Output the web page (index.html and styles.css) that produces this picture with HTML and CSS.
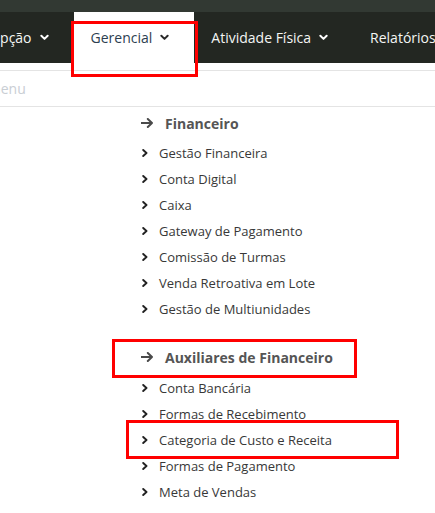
FILE: index.html
```html
<!DOCTYPE html>
<html lang="pt-BR">
<head>
<meta charset="utf-8">
<title>Menu Gerencial</title>
<link rel="stylesheet" href="styles.css">
</head>
<body>
<div class="topstrip"></div>
<nav class="nav">
  <ul class="nav-list">
    <li class="nav-item"><span>Recepção</span><svg class="caret" viewBox="0 0 10 7" width="9" height="7"><path d="M1.5 1.5 L5 5 L8.5 1.5" /></svg></li>
    <li class="nav-item active"><span>Gerencial</span><svg class="caret" viewBox="0 0 10 7" width="9" height="7"><path d="M1.5 1.5 L5 5 L8.5 1.5" /></svg></li>
    <li class="nav-item"><span>Atividade Física</span><svg class="caret" viewBox="0 0 10 7" width="9" height="7"><path d="M1.5 1.5 L5 5 L8.5 1.5" /></svg></li>
    <li class="nav-item"><span>Relatórios</span><svg class="caret" viewBox="0 0 10 7" width="9" height="7"><path d="M1.5 1.5 L5 5 L8.5 1.5" /></svg></li>
  </ul>
</nav>
<div class="gap"></div>
<div class="search"><span class="placeholder">Buscar no menu</span></div>
<div class="menu">
  <div class="group">
    <div class="group-title"><svg class="arrow" viewBox="0 0 12 10" width="12" height="10"><path d="M0.5 5 H11 M6.8 1 L11 5 L6.8 9" /></svg><span>Financeiro</span></div>
    <ul class="items">
      <li><svg class="chev" viewBox="0 0 6 8" width="6" height="8"><path d="M1.2 1 L4.5 4 L1.2 7" /></svg>Gestão Financeira</li>
      <li><svg class="chev" viewBox="0 0 6 8" width="6" height="8"><path d="M1.2 1 L4.5 4 L1.2 7" /></svg>Conta Digital</li>
      <li><svg class="chev" viewBox="0 0 6 8" width="6" height="8"><path d="M1.2 1 L4.5 4 L1.2 7" /></svg>Caixa</li>
      <li><svg class="chev" viewBox="0 0 6 8" width="6" height="8"><path d="M1.2 1 L4.5 4 L1.2 7" /></svg>Gateway de Pagamento</li>
      <li><svg class="chev" viewBox="0 0 6 8" width="6" height="8"><path d="M1.2 1 L4.5 4 L1.2 7" /></svg>Comissão de Turmas</li>
      <li><svg class="chev" viewBox="0 0 6 8" width="6" height="8"><path d="M1.2 1 L4.5 4 L1.2 7" /></svg>Venda Retroativa em Lote</li>
      <li><svg class="chev" viewBox="0 0 6 8" width="6" height="8"><path d="M1.2 1 L4.5 4 L1.2 7" /></svg>Gestão de Multiunidades</li>
    </ul>
  </div>
  <div class="group second">
    <div class="group-title"><svg class="arrow" viewBox="0 0 12 10" width="12" height="10"><path d="M0.5 5 H11 M6.8 1 L11 5 L6.8 9" /></svg><span>Auxiliares de Financeiro</span></div>
    <ul class="items">
      <li><svg class="chev" viewBox="0 0 6 8" width="6" height="8"><path d="M1.2 1 L4.5 4 L1.2 7" /></svg>Conta Bancária</li>
      <li><svg class="chev" viewBox="0 0 6 8" width="6" height="8"><path d="M1.2 1 L4.5 4 L1.2 7" /></svg>Formas de Recebimento</li>
      <li><svg class="chev" viewBox="0 0 6 8" width="6" height="8"><path d="M1.2 1 L4.5 4 L1.2 7" /></svg>Categoria de Custo e Receita</li>
      <li><svg class="chev" viewBox="0 0 6 8" width="6" height="8"><path d="M1.2 1 L4.5 4 L1.2 7" /></svg>Formas de Pagamento</li>
      <li><svg class="chev" viewBox="0 0 6 8" width="6" height="8"><path d="M1.2 1 L4.5 4 L1.2 7" /></svg>Meta de Vendas</li>
    </ul>
  </div>
</div>
<div class="mark mark-tab"></div>
<div class="mark mark-group"></div>
<div class="mark mark-item"></div>
</body>
</html>
```
FILE: styles.css
```css
html, body {
  margin: 0;
  padding: 0;
  background: #ffffff;
  overflow: hidden;
}
body {
  font-family: "Open Sans", "Noto Sans", sans-serif;
  width: 435px;
  height: 513px;
  position: relative;
}
.topstrip {
  height: 12px;
  background: #323933;
}
.nav {
  height: 51px;
  background: #232722;
  overflow: hidden;
}
.nav-list {
  list-style: none;
  margin: 0 0 0 -48px;
  padding: 0;
  display: flex;
  height: 100%;
  white-space: nowrap;
}
.nav-item {
  display: flex;
  align-items: center;
  gap: 8px;
  padding: 0 25px 0 17px;
  color: #f4f6f4;
  font-size: 14px;
  height: 100%;
  padding-bottom: 1px;
  box-sizing: border-box;
}
.nav-item .caret path {
  fill: none;
  stroke: #ffffff;
  stroke-width: 2.2;
  stroke-linecap: round;
  stroke-linejoin: round;
}
.nav-item.active {
  background: #ffffff;
  color: #2c3e50;
}
.nav-item.active .caret path {
  stroke: #2a2a2a;
}
.gap {
  height: 7px;
  border-bottom: 1px solid #e4e4e4;
}
.search {
  height: 35px;
  border-bottom: 1px solid #e4e4e4;
  display: flex;
  align-items: center;
  overflow: hidden;
}
.placeholder {
  font-size: 14px;
  color: #c9ced4;
  margin-left: -81px;
  white-space: nowrap;
}
.menu {
  padding-top: 6px;
}
.group-title {
  display: flex;
  align-items: center;
  gap: 12px;
  height: 20px;
  padding-left: 141px;
  font-size: 14px;
  font-weight: 700;
  color: #555555;
  margin-bottom: 7px;
}
.arrow path {
  fill: none;
  stroke: #4a4a4a;
  stroke-width: 2;
  stroke-linecap: round;
  stroke-linejoin: round;
}
.second {
  margin-top: 25px;
}
.second .group-title {
  margin-bottom: 8px;
}
.items {
  list-style: none;
  margin: 0;
  padding: 0 0 0 142px;
}
.items li {
  display: flex;
  align-items: center;
  gap: 11px;
  height: 26px;
  font-size: 13px;
  color: #383838;
}
.chev path {
  fill: none;
  stroke: #222222;
  stroke-width: 1.9;
  stroke-linecap: round;
  stroke-linejoin: round;
}
.mark {
  position: absolute;
  border: 3px solid #ff0000;
  box-sizing: border-box;
}
.mark-tab {
  left: 71px;
  top: 21px;
  width: 127px;
  height: 56px;
}
.mark-group {
  left: 112px;
  top: 339px;
  width: 245px;
  height: 39px;
}
.mark-item {
  left: 126px;
  top: 420px;
  width: 273px;
  height: 39px;
}
```
